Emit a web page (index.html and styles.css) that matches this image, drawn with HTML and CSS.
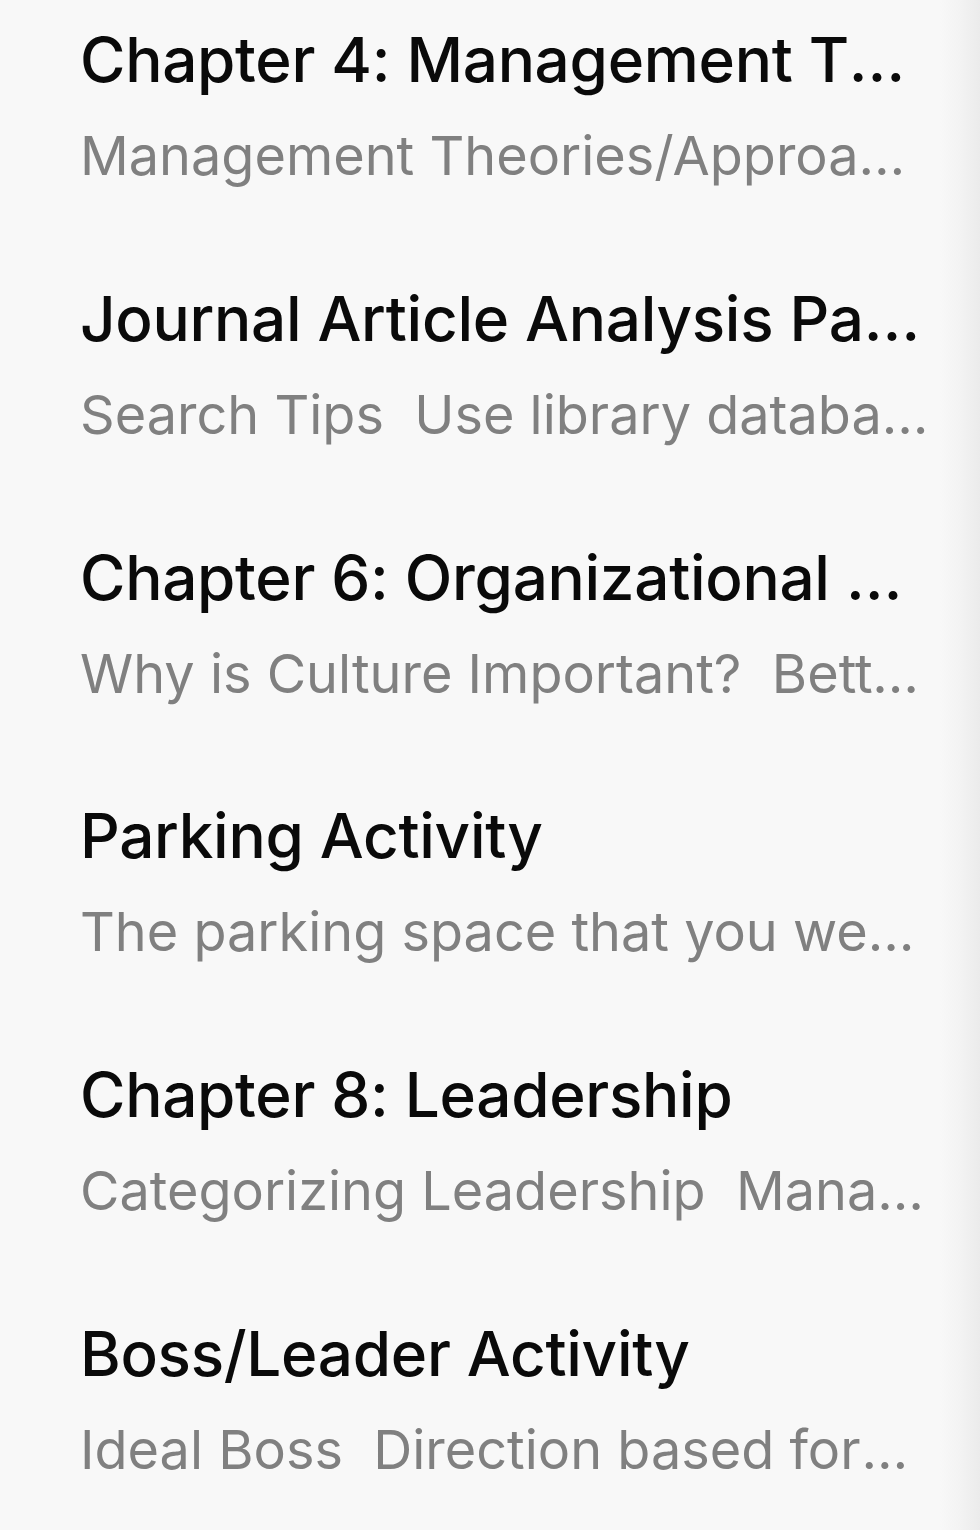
FILE: index.html
```html
<!DOCTYPE html>
<html>
<head>
<meta charset="utf-8">
<link rel="stylesheet" href="styles.css">
</head>
<body>
<div class="panel">
  <ul class="list">
    <li class="item">
      <div class="title">Chapter 4: Management Theories and Approaches</div>
      <div class="snippet">Management Theories/Approaches&nbsp; Classical approach</div>
    </li>
    <li class="item">
      <div class="title">Journal Article Analysis Paper</div>
      <div class="snippet">Search Tips&nbsp; Use library databases to find articles</div>
    </li>
    <li class="item">
      <div class="title">Chapter 6: Organizational Culture</div>
      <div class="snippet">Why is Culture Important?&nbsp; Better performance</div>
    </li>
    <li class="item">
      <div class="title">Parking Activity</div>
      <div class="snippet">The parking space that you were assigned</div>
    </li>
    <li class="item">
      <div class="title">Chapter 8: Leadership</div>
      <div class="snippet">Categorizing Leadership&nbsp; Managers vs. leaders</div>
    </li>
    <li class="item">
      <div class="title">Boss/Leader Activity</div>
      <div class="snippet">Ideal Boss&nbsp; Direction based formal authority</div>
    </li>
  </ul>
</div>
</body>
</html>
```
FILE: styles.css
```css
html, body {
  margin: 0;
  padding: 0;
}
body {
  width: 980px;
  height: 1530px;
  overflow: hidden;
  background: #f8f8f8;
  font-family: Inter, "Noto Sans", sans-serif;
}
.panel {
  height: 1530px;
  background: linear-gradient(to right, #f8f8f8 0, #f8f8f8 940px, #f3f3f3 960px, #ebebeb 980px);
}
.list {
  list-style: none;
  margin: 0;
  padding: 0;
}
.item {
  height: 258.8px;
  box-sizing: border-box;
  padding: 12px 50px 0 80px;
}
.title, .snippet {
  white-space: nowrap;
  overflow: hidden;
  text-overflow: ellipsis;
}
.title {
  font-size: 62px;
  font-weight: 500;
  letter-spacing: -0.3px;
  line-height: 96px;
  color: #0a0a0a;
}
.snippet {
  font-size: 54px;
  line-height: 96px;
  color: #808080;
}
```
